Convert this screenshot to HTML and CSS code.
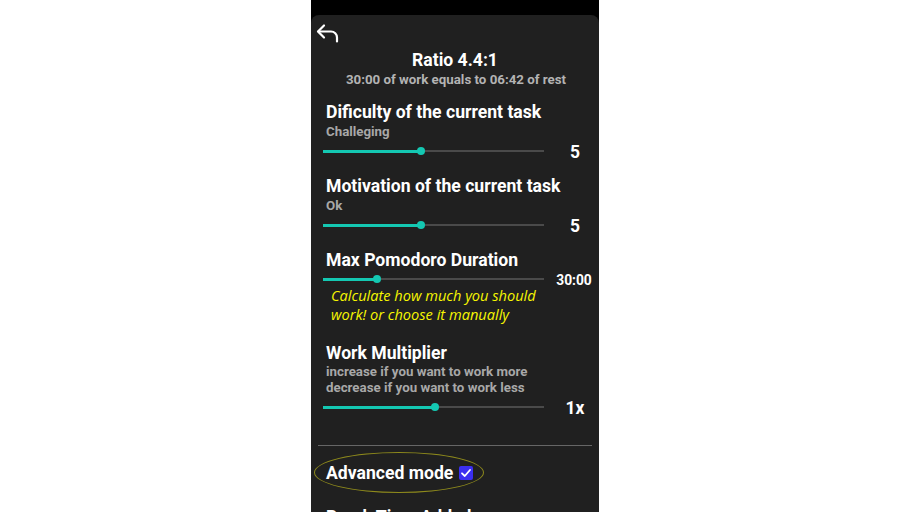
FILE: index.html
```html
<!DOCTYPE html>
<html>
<head>
<meta charset="utf-8">
<link rel="stylesheet" href="styles.css">
</head>
<body>
<div class="phone">
  <div class="panel">
    <div class="back">
      <svg width="24" height="22" viewBox="0 0 24 22" fill="none" stroke="#fff" stroke-width="2.2" stroke-linecap="round" stroke-linejoin="round">
        <path d="M9 3.5 L3 9.5 L9 15.5"/>
        <path d="M3.5 9.5 H16 A6 6 0 0 1 22 15.5 V19.5"/>
      </svg>
    </div>
    <div class="title">Ratio 4.4:1</div>
    <div class="subtitle">30:00 of work equals to 06:42 of rest</div>

    <div class="section s1">
      <div class="heading">Dificulty of the current task</div>
      <div class="sub">Challeging</div>
      <div class="slider-row">
        <div class="slider"><div class="fill" style="width:44.5%"></div><div class="thumb" style="left:44.5%"></div></div>
        <div class="value">5</div>
      </div>
    </div>

    <div class="section">
      <div class="heading">Motivation of the current task</div>
      <div class="sub">Ok</div>
      <div class="slider-row">
        <div class="slider"><div class="fill" style="width:44.5%"></div><div class="thumb" style="left:44.5%"></div></div>
        <div class="value">5</div>
      </div>
    </div>

    <div class="section">
      <div class="heading">Max Pomodoro Duration</div>
      <div class="slider-row">
        <div class="slider"><div class="fill" style="width:24.5%"></div><div class="thumb" style="left:24.5%"></div></div>
        <div class="value small">30:00</div>
      </div>
      <div class="hint">Calculate how much you should<br>work! or choose it manually</div>
    </div>

    <div class="section s4">
      <div class="heading">Work Multiplier</div>
      <div class="sub2">increase if you want to work more<br>decrease if you want to work less</div>
      <div class="slider-row r4">
        <div class="slider"><div class="fill" style="width:50.5%"></div><div class="thumb" style="left:50.5%"></div></div>
        <div class="value">1x</div>
      </div>
    </div>

    <div class="divider"></div>

    <div class="adv-wrap">
      <label class="adv">Advanced mode <span class="check"><svg width="14" height="14" viewBox="0 0 14 14" fill="none" stroke="#fff" stroke-width="1.8" stroke-linecap="round" stroke-linejoin="round"><path d="M3 7.3 L5.8 10 L11 4"/></svg></span></label>
    </div>

    <div class="heading last">Break Time Added</div>
  </div>
</div>
</body>
</html>
```
FILE: styles.css
```css
html, body {
  margin: 0;
  padding: 0;
  background: #ffffff;
  height: 512px;
  overflow: hidden;
}
.phone {
  width: 288px;
  height: 512px;
  margin: 0 auto;
  background: #000;
  padding-top: 15px;
  box-sizing: border-box;
  font-family: Roboto, "Liberation Sans", sans-serif;
  color: #fff;
}
.panel {
  background: #202020;
  border-radius: 8px 8px 0 0;
  height: 497px;
  overflow: hidden;
}
.back {
  height: 22px;
  padding: 7px 0 0 4px;
}
.back svg { display: block; }
.title {
  text-align: center;
  font-weight: 700;
  font-size: 17.6px;
  line-height: 20px;
  margin-top: 6px;
}
.subtitle {
  text-align: center;
  font-weight: 700;
  font-size: 13.3px;
  line-height: 20px;
  color: #b3b3b3;
  padding-left: 2px;
}
.section { padding-left: 15px; }
.s1 { margin-top: 11px; }
.section + .section { margin-top: 14px; }
.heading {
  font-weight: 700;
  font-size: 17.6px;
  line-height: 20px;
  padding-top: 1px;
  height: 19px;
}
.sub {
  font-weight: 700;
  font-size: 13.3px;
  line-height: 20px;
  color: #a8a8a8;
  padding-top: 1px;
  height: 19px;
}
.sub2 {
  font-weight: 700;
  font-size: 13.3px;
  line-height: 16px;
  color: #a8a8a8;
  margin-top: 2px;
}
.slider-row {
  display: flex;
  align-items: center;
  height: 20px;
  margin-left: -3px;
}
.slider {
  position: relative;
  width: 221px;
  height: 2px;
  background: #4a4a4a;
}
.fill {
  position: absolute;
  left: 0;
  top: -0.5px;
  height: 3px;
  background: #14c8b2;
}
.thumb {
  position: absolute;
  top: 50%;
  width: 8px;
  height: 8px;
  border-radius: 50%;
  background: #14c8b2;
  transform: translate(-50%, -50%);
}
.value {
  flex: 1;
  text-align: center;
  font-weight: 700;
  font-size: 17.5px;
  line-height: 20px;
  padding-left: 7px;
  margin-top: 2px;
}
.value.small { font-size: 13.8px; padding-left: 5px; }
.hint {
  font-family: "Open Sans", "Noto Sans", sans-serif;
  font-style: italic;
  font-size: 14.6px;
  line-height: 19px;
  color: #f7f700;
  margin-top: -3px;
  padding-left: 5px;
}
.section.s4 { margin-top: 18px; }
.r4 { margin-top: 1px; }
.divider {
  height: 1px;
  background: #666;
  margin: 28px 7px 0 7px;
}
.adv-wrap {
  margin-top: 6px;
  padding-left: 3px;
}
.adv {
  display: inline-flex;
  align-items: center;
  box-sizing: border-box;
  width: 170px;
  height: 41px;
  border: 1px solid #8e8a1c;
  border-radius: 50%;
  padding-left: 11px;
  font-weight: 700;
  font-size: 17.6px;
}
.check {
  display: inline-block;
  width: 14px;
  height: 14px;
  background: #3b2ff0;
  border-radius: 2px;
  margin-left: 6px;
}
.check svg { display: block; }
.heading.last {
  margin-top: 13px;
  padding-left: 15px;
}
```
